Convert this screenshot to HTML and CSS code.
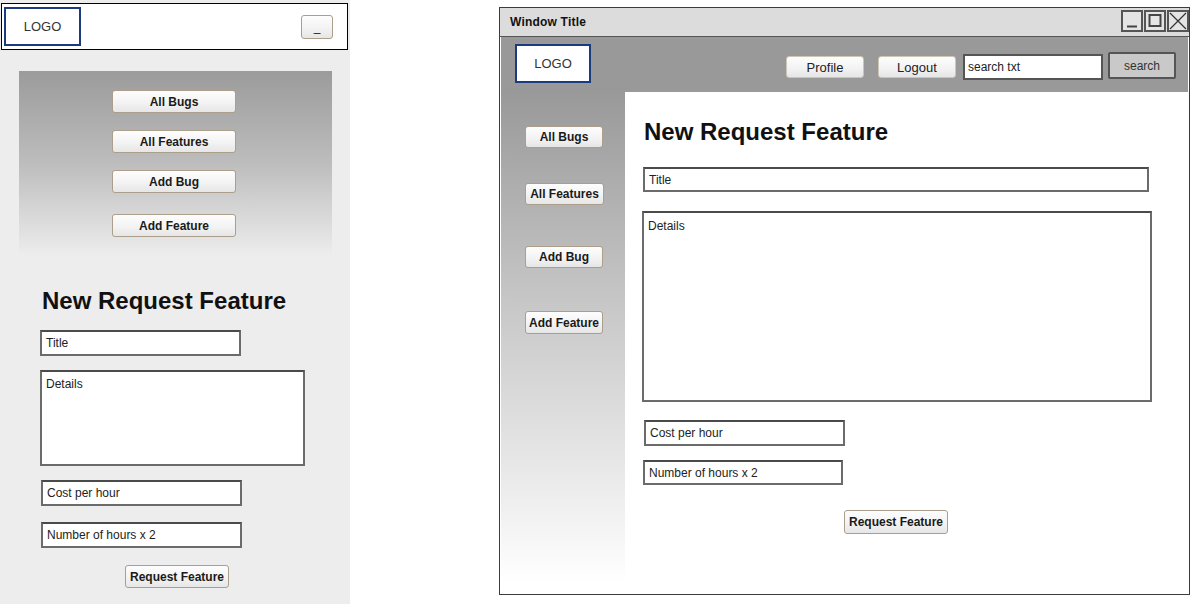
FILE: index.html
```html
<!DOCTYPE html>
<html lang="en">
<head>
<meta charset="utf-8">
<title>New Request Feature</title>
<link rel="stylesheet" href="styles.css">
</head>
<body>
<div class="page">
  <section class="mobile">
    <header class="m-header">
      <div class="logo">LOGO</div>
      <button class="btn menu-btn">_</button>
    </header>
    <nav class="m-nav">
      <button class="btn nav-btn">All Bugs</button>
      <button class="btn nav-btn">All Features</button>
      <button class="btn nav-btn">Add Bug</button>
      <button class="btn nav-btn nav-last">Add Feature</button>
    </nav>
    <main class="m-form">
      <h1 class="heading m-heading">New Request Feature</h1>
      <div class="field m-title">Title</div>
      <div class="field field-area m-details">Details</div>
      <div class="field m-cost">Cost per hour</div>
      <div class="field m-hours">Number of hours x 2</div>
      <button class="btn submit m-submit">Request Feature</button>
    </main>
  </section>

  <section class="window">
    <div class="titlebar">
      <span class="win-title">Window Title</span>
      <div class="controls">
        <span class="ctrl"><svg width="18" height="18" viewBox="0 0 18 18"><line x1="4" y1="14.5" x2="14" y2="14.5" stroke="#444" stroke-width="2"/></svg></span>
        <span class="ctrl"><svg width="18" height="18" viewBox="0 0 18 18"><rect x="3.5" y="3" width="11" height="11" fill="none" stroke="#444" stroke-width="2"/></svg></span>
        <span class="ctrl"><svg width="18" height="18" viewBox="0 0 18 18"><path d="M1 1 L17 17 M17 1 L1 17" stroke="#333" stroke-width="1.2" fill="none"/></svg></span>
      </div>
    </div>
    <header class="w-header">
      <div class="logo w-logo">LOGO</div>
      <button class="btn hbtn profile">Profile</button>
      <button class="btn hbtn logout">Logout</button>
      <div class="search-input">search txt</div>
      <button class="search-btn">search</button>
    </header>
    <div class="w-body">
      <aside class="sidebar">
        <button class="btn sb-btn">All Bugs</button>
        <button class="btn sb-btn sb-features">All Features</button>
        <button class="btn sb-btn sb-addbug">Add Bug</button>
        <button class="btn sb-btn sb-addfeature">Add Feature</button>
      </aside>
      <main class="content">
        <h1 class="heading w-heading">New Request Feature</h1>
        <div class="field w-title">Title</div>
        <div class="field field-area w-details">Details</div>
        <div class="field w-cost">Cost per hour</div>
        <div class="field w-hours">Number of hours x 2</div>
        <button class="btn submit w-submit">Request Feature</button>
      </main>
    </div>
  </section>
</div>
</body>
</html>
```

FILE: styles.css
```css
* { box-sizing: border-box; }

body {
  margin: 0;
  background: #fff;
  font-family: "Liberation Sans", Arial, sans-serif;
  color: #222;
}

.page {
  display: flex;
  align-items: flex-start;
  height: 604px;
  overflow: hidden;
}

/* ---------- shared ---------- */
.btn {
  display: flex;
  align-items: center;
  justify-content: center;
  padding: 0;
  border: 1px solid #ab9f8c;
  border-radius: 3px;
  background: linear-gradient(#fdfdfd, #f3f3f3 55%, #e6e6e6);
  font: bold 12px "Liberation Sans", Arial, sans-serif;
  color: #1a1a1a;
  white-space: nowrap;
}

.logo {
  display: flex;
  align-items: center;
  justify-content: center;
  border: 2px solid #1c3a7e;
  background: #fff;
  font-size: 13px;
  color: #333;
}

.heading {
  margin: 0;
  font-size: 24px;
  line-height: 28px;
  font-weight: bold;
  color: #111;
  white-space: nowrap;
}

.field {
  display: flex;
  align-items: center;
  padding: 0 4px;
  border: 2px solid #6b6b6b;
  border-top-color: #4a4a4a;
  background: #fff;
  font-size: 12px;
  color: #222;
  white-space: nowrap;
}

.field-area {
  align-items: flex-start;
  padding-top: 5px;
}

/* ---------- mobile ---------- */
.mobile {
  flex-shrink: 0;
  width: 350px;
  height: 604px;
  background: #ededed;
  display: flex;
  flex-direction: column;
}

.m-header {
  margin: 3px 0 0 1px;
  width: 347px;
  height: 47px;
  border: 1px solid #000;
  background: #fff;
  display: flex;
  align-items: center;
  justify-content: space-between;
  padding: 0 14px 0 2px;
}

.m-header .logo {
  width: 77px;
  height: 39px;
}

.menu-btn {
  width: 32px;
  height: 24px;
  font-weight: normal;
  color: #222;
}

.m-nav {
  margin: 21px 0 0 19px;
  width: 313px;
  height: 185px;
  background: linear-gradient(#9b9b9b, #bdbdbd 50%, #ededed);
  display: flex;
  flex-direction: column;
  gap: 17px;
  padding: 19px 0 0 93px;
}

.nav-btn {
  width: 124px;
  height: 23px;
}

.nav-last { margin-top: 4px; }

.m-form {
  display: flex;
  flex-direction: column;
  align-items: flex-start;
  padding-left: 40px;
}

.m-heading { margin: 31px 0 0 2px; }

.m-title { margin-top: 15px; width: 201px; height: 26px; }
.m-details { margin-top: 14px; width: 265px; height: 96px; }
.m-cost { margin: 14px 0 0 1px; width: 201px; height: 26px; }
.m-hours { margin: 16px 0 0 1px; width: 201px; height: 26px; }
.m-submit { margin: 17px 0 0 85px; width: 104px; height: 23px; }

/* ---------- desktop window ---------- */
.window {
  flex-shrink: 0;
  margin: 7px 0 0 149px;
  width: 691px;
  height: 588px;
  border: 1px solid #3c3c3c;
  background: #fff;
  display: flex;
  flex-direction: column;
}

.titlebar {
  flex-shrink: 0;
  height: 29px;
  background: #dcdcdc;
  border-bottom: 1px solid #555;
  display: flex;
  align-items: center;
  justify-content: space-between;
  padding-left: 10px;
}

.win-title {
  font-size: 12px;
  font-weight: bold;
  letter-spacing: 0.2px;
  color: #111;
}

.controls {
  display: flex;
  gap: 1px;
  margin-bottom: 2px;
}

.ctrl {
  width: 22px;
  height: 22px;
  border: 2px solid #555;
  background: #e4e4e4;
  display: block;
}

.ctrl svg { display: block; }

.w-header {
  flex-shrink: 0;
  height: 55px;
  margin: 0 1px;
  background: #999;
  display: flex;
  align-items: center;
  padding: 5px 12px 0 14px;
}

.w-logo {
  align-self: flex-start;
  margin-top: 2px;
  width: 76px;
  height: 39px;
}

.hbtn {
  width: 78px;
  height: 22px;
  font-weight: normal;
  font-size: 13px;
  border-color: #cfc5b6;
  color: #222;
}

.profile { margin-left: auto; }
.logout { margin-left: 14px; }

.search-input {
  margin-left: 7px;
  width: 140px;
  height: 26px;
  border: 2px solid #555;
  background: #fff;
  font-size: 12px;
  color: #222;
  display: flex;
  align-items: center;
  padding-left: 3px;
}

.search-btn {
  margin: -3px 0 0 5px;
  width: 68px;
  height: 27px;
  border: 2px solid #555;
  border-radius: 2px;
  background: #c9c9c9;
  font: 12px "Liberation Sans", Arial, sans-serif;
  color: #333;
  padding: 0;
}

.w-body {
  flex: 1;
  display: flex;
}

.sidebar {
  flex-shrink: 0;
  width: 124px;
  height: 491px;
  margin-left: 1px;
  background: linear-gradient(#999, #c4c4c4 40%, #fff);
  display: flex;
  flex-direction: column;
  align-items: flex-start;
  padding: 34px 0 0 24px;
}

.sb-btn { width: 78px; height: 22px; }
.sb-features { margin-top: 35px; width: 79px; }
.sb-addbug { margin-top: 41px; }
.sb-addfeature { margin-top: 43px; height: 23px; }

.content {
  flex: 1;
  display: flex;
  flex-direction: column;
  align-items: flex-start;
  padding: 26px 0 0 18px;
}

.w-heading { margin-left: 1px; }

.w-title { margin-top: 21px; width: 506px; height: 25px; }
.w-details { margin: 19px 0 0 -1px; width: 510px; height: 191px; padding-top: 6px; }
.w-cost { margin: 18px 0 0 1px; width: 201px; height: 26px; }
.w-hours { margin-top: 14px; width: 200px; height: 25px; }
.w-submit { margin: 25px 0 0 201px; width: 104px; height: 24px; }
```
